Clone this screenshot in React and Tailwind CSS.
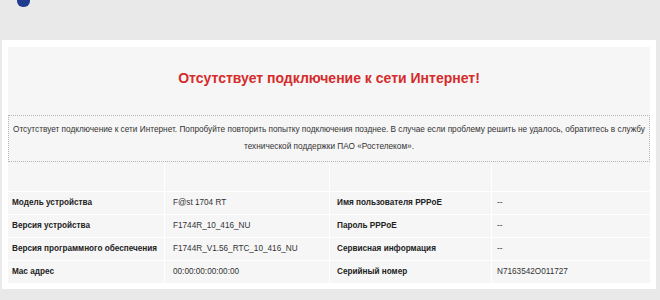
export default function App() {
  const rows = [
    ['Модель устройства', 'F@st 1704 RT', 'Имя пользователя PPPoE', '--'],
    ['Версия устройства', 'F1744R_10_416_NU', 'Пароль PPPoE', '--'],
    ['Версия программного обеспечения', 'F1744R_V1.56_RTC_10_416_NU', 'Сервисная информация', '--'],
    ['Mac адрес', '00:00:00:00:00:00', 'Серийный номер', 'N7163542O011727'],
  ];

  return (
    <div className="h-[300px] w-[660px] overflow-hidden bg-[#e9e9e9] font-['Liberation_Sans',Arial,sans-serif] text-[#222]">
      <header className="flex h-[40px] items-start pl-[17px]">
        <div className="-mt-[5px] h-[12px] w-[13px] rounded-full bg-[#1f3c8f]" />
      </header>

      <div className="ml-[2px] w-[654px] bg-white px-[6px] pt-[7px] pb-[6px]">
        <div className="bg-[#f6f6f6]">
          <div className="flex h-[68px] items-center justify-center pb-[6px]">
            <h1 className="text-[14px] font-bold text-[#d52b2b]">Отсутствует подключение к сети Интернет!</h1>
          </div>

          <div className="border border-dotted border-[#b5b5b5] px-[2px] pt-[5px] pb-[6px] text-center text-[8.25px] leading-[17px] text-[#333]">
            Отсутствует подключение к сети Интернет. Попробуйте повторить попытку подключения позднее. В случае если проблему решить не удалось, обратитесь в службу технической поддержки ПАО «Ростелеком».
          </div>

          <div className="mt-[1px] grid grid-cols-[157px_165px_162px_1fr]">
            <div className="h-[28px] border-r border-white" />
            <div className="h-[28px] border-r border-white" />
            <div className="h-[28px] border-r border-white" />
            <div className="h-[28px]" />
            {rows.map((r) => (
              <Row key={r[0]} cells={r} />
            ))}
          </div>
        </div>
      </div>
    </div>
  );
}

function Row({ cells }) {
  return (
    <>
      <div className="flex h-[23px] items-center border-t border-r border-white pl-[4px] text-[8.2px] font-bold">{cells[0]}</div>
      <div className="flex h-[23px] items-center border-t border-r border-white pl-[8px] text-[8.2px] text-[#333]">{cells[1]}</div>
      <div className="flex h-[23px] items-center border-t border-r border-white pl-[7px] text-[8.2px] font-bold">{cells[2]}</div>
      <div className="flex h-[23px] items-center border-t border-white pl-[5px] text-[8.2px] text-[#333]">{cells[3]}</div>
    </>
  );
}
